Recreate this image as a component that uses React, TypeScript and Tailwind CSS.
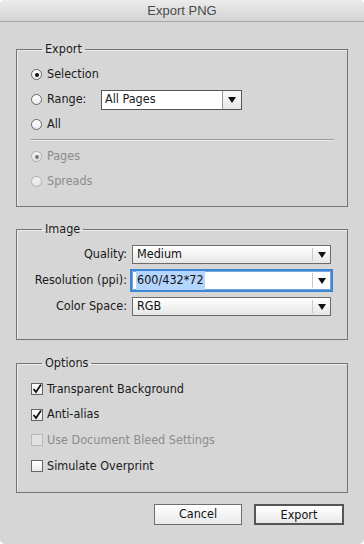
import React from "react";

const font = {
  fontFamily: '"DejaVu Sans Condensed", "DejaVu Sans", Verdana, sans-serif',
  fontStretch: "condensed" as const,
};

function Radio({ checked, disabled }: { checked?: boolean; disabled?: boolean }) {
  return (
    <span
      className={`relative inline-flex w-[11px] h-[11px] rounded-full border items-center justify-center shrink-0 ${
        disabled
          ? "border-[#b0b0b0] bg-gradient-to-b from-[#f2f2f2] to-[#e4e4e4]"
          : "border-[#6a6a6a] bg-gradient-to-b from-white to-[#ececec]"
      }`}
    >
      {checked && (
        <span
          className={`w-[4px] h-[4px] rounded-full ${disabled ? "bg-[#777]" : "bg-[#111]"}`}
        />
      )}
    </span>
  );
}

function Check({ checked, disabled }: { checked?: boolean; disabled?: boolean }) {
  return (
    <span
      className={`inline-flex w-[12px] h-[12px] border items-center justify-center shrink-0 ${
        disabled
          ? "border-[#b8b8b8] bg-[#e2e2e2]"
          : "border-[#666] bg-gradient-to-b from-white to-[#eaeaea]"
      }`}
    >
      {checked && (
        <svg width="10" height="10" viewBox="0 0 10 10">
          <path d="M1.5 5 L4 8 L9 0.5" fill="none" stroke="#111" strokeWidth="1.8" />
        </svg>
      )}
    </span>
  );
}

function Arrow() {
  return (
    <svg width="8" height="6" viewBox="0 0 8 6">
      <path d="M0 0 H8 L4 6 Z" fill="#111" />
    </svg>
  );
}

function Group({ title, children }: { title: string; children: React.ReactNode }) {
  return (
    <fieldset className="border border-[#747474] shadow-[inset_1px_1px_0_#ececec] pl-[14px] pr-[16px] min-w-0">
      <legend className="ml-[11px] px-[3px] leading-[14px] text-[#1a1a1a]">{title}</legend>
      {children}
    </fieldset>
  );
}

function Select({ value }: { value: string }) {
  return (
    <div className="flex-1 h-[19px] flex border border-[#6c6c6c] bg-gradient-to-b from-white to-[#e6e6e6]">
      <div className="flex-1 pl-[4px] flex items-center text-[#111]">{value}</div>
      <div className="w-[18px] flex items-center justify-center border-l border-[#c8c8c8] my-[2px]">
        <Arrow />
      </div>
    </div>
  );
}

export default function App() {
  return (
    <div className="w-[364px] h-[544px] bg-white" style={font}>
      <div className="w-[364px] h-[544px] rounded-[5px] bg-[#d6d6d6] flex flex-col overflow-hidden">
        {/* title bar */}
        <div
          className="h-[22px] shrink-0 bg-gradient-to-b from-[#ececec] to-[#d3d3d3] border-b border-[#a9a9a9] flex items-center justify-center text-[13px] text-[#4b4b4b]"
          style={{ fontFamily: '"Liberation Sans", Arial, sans-serif', fontStretch: "normal" }}
        >
          Export PNG
        </div>

        <div className="flex flex-col pl-[16px] pr-[16px] pt-[20px] text-[12.5px] text-[#1a1a1a] whitespace-nowrap">
          {/* Export */}
          <Group title="Export">
            <div className="flex flex-col pt-[6px]">
              <div className="h-[25px] flex items-center gap-[5px]">
                <Radio checked />
                <span>Selection</span>
              </div>
              <div className="h-[25px] flex items-center gap-[5px]">
                <Radio />
                <span className="w-[49px]">Range:</span>
                <div className="w-[141px] h-[20px] flex border border-[#555] bg-white">
                  <div className="flex-1 pl-[3px] flex items-center">All Pages</div>
                  <div className="w-[19px] flex items-center justify-center border-l border-[#999] bg-gradient-to-b from-[#fafafa] to-[#e8e8e8]">
                    <Arrow />
                  </div>
                </div>
              </div>
              <div className="h-[25px] flex items-center gap-[5px]">
                <Radio />
                <span>All</span>
              </div>
            </div>
            <div className="mt-[2px] mr-[-3px] border-t border-[#9a9a9a] shadow-[0_1px_0_#ececec]" />
            <div className="flex flex-col pt-[4px] pb-[12px] text-[#8c8c8c]">
              <div className="h-[25px] flex items-center gap-[5px]">
                <Radio checked disabled />
                <span>Pages</span>
              </div>
              <div className="h-[25px] flex items-center gap-[5px]">
                <Radio disabled />
                <span>Spreads</span>
              </div>
            </div>
          </Group>

          {/* Image */}
          <div className="mt-[15px]">
            <Group title="Image">
              <div className="flex flex-col gap-[7px] pt-[9px] pb-[23px]">
                <div className="flex items-center gap-[5px]">
                  <span className="w-[96px] text-right">Quality:</span>
                  <Select value="Medium" />
                </div>
                <div className="flex items-center gap-[5px]">
                  <span className="w-[96px] text-right">Resolution (ppi):</span>
                  <div className="flex-1 h-[19px] flex bg-white outline-2 outline-[#3d86d6] border border-[#7aa7dc]">
                    <div className="flex-1 pl-[3px] flex items-center">
                      <span className="bg-[#b4d5fe] text-[#111] px-[1px]">600/432*72</span>
                    </div>
                    <div className="w-[18px] flex items-center justify-center border-l border-[#c8c8c8] my-[1px]">
                      <Arrow />
                    </div>
                  </div>
                </div>
                <div className="flex items-center gap-[5px]">
                  <span className="w-[96px] text-right">Color Space:</span>
                  <Select value="RGB" />
                </div>
              </div>
            </Group>
          </div>

          {/* Options */}
          <div className="mt-[16px]">
            <Group title="Options">
              <div className="flex flex-col pt-[6px] pb-[13px]">
                <div className="h-[26px] flex items-center gap-[4px]">
                  <Check checked />
                  <span>Transparent Background</span>
                </div>
                <div className="h-[25px] flex items-center gap-[4px]">
                  <Check checked />
                  <span>Anti-alias</span>
                </div>
                <div className="h-[26px] flex items-center gap-[4px] text-[#8c8c8c]">
                  <Check disabled />
                  <span>Use Document Bleed Settings</span>
                </div>
                <div className="h-[26px] flex items-center gap-[4px]">
                  <Check />
                  <span>Simulate Overprint</span>
                </div>
              </div>
            </Group>
          </div>

          {/* buttons */}
          <div className="mt-[11px] flex justify-end gap-[12px] pr-[4px]">
            <button className="w-[88px] h-[21px] border border-[#6e6e6e] bg-gradient-to-b from-white to-[#e9e9e9] text-[#111]">
              Cancel
            </button>
            <button className="w-[90px] h-[21px] border-2 border-[#555] bg-gradient-to-b from-white to-[#e9e9e9] text-[#111]">
              Export
            </button>
          </div>
        </div>
      </div>
    </div>
  );
}
